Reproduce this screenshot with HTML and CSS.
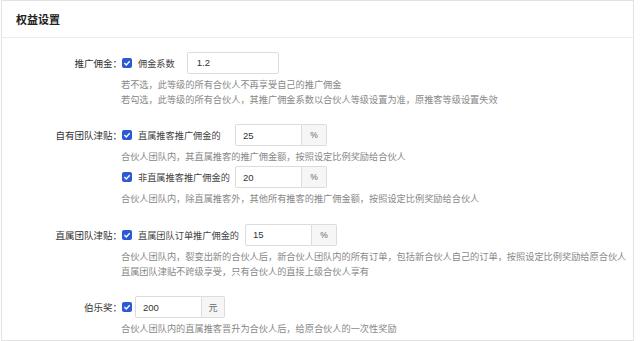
FILE: index.html
```html
<!DOCTYPE html>
<html>
<head>
    <meta charset="UTF-8">
    <meta name="viewport" content="width=device-width, initial-scale=1.0">
    <title>权益设置</title>
    <link rel="stylesheet" href="styles.css">
</head>
<body>
    <div class="panel">
        <div class="panelHead">权益设置</div>
        <div class="panelBody">

            <div class="campo">
                <div class="rotulo">推广佣金：</div>
                <div class="conteudo">
                    <div class="linha">
                        <span class="check"><svg viewBox="0 0 10 10"><rect width="10" height="10" rx="2" fill="#2c59d4"/><polyline points="2.4,5.1 4.3,7 7.7,3.2" fill="none" stroke="#fff" stroke-width="1.4"/></svg></span>
                        <span class="opcao opcaoCurta">佣金系数</span>
                        <input type="text" class="entrada entradaLonga" value="1.2" readonly>
                    </div>
                    <p class="dica">若不选，此等级的所有合伙人不再享受自己的推广佣金<br>若勾选，此等级的所有合伙人，其推广佣金系数以合伙人等级设置为准，原推客等级设置失效</p>
                </div>
            </div>

            <div class="campo">
                <div class="rotulo">自有团队津贴：</div>
                <div class="conteudo">
                    <div class="linha">
                        <span class="check"><svg viewBox="0 0 10 10"><rect width="10" height="10" rx="2" fill="#2c59d4"/><polyline points="2.4,5.1 4.3,7 7.7,3.2" fill="none" stroke="#fff" stroke-width="1.4"/></svg></span>
                        <span class="opcao opcaoFixa">直属推客推广佣金的</span>
                        <input type="text" class="entrada" value="25" readonly>
                        <span class="sufixo">%</span>
                    </div>
                    <p class="dica">合伙人团队内，其直属推客的推广佣金额，按照设定比例奖励给合伙人</p>
                    <div class="linha">
                        <span class="check"><svg viewBox="0 0 10 10"><rect width="10" height="10" rx="2" fill="#2c59d4"/><polyline points="2.4,5.1 4.3,7 7.7,3.2" fill="none" stroke="#fff" stroke-width="1.4"/></svg></span>
                        <span class="opcao opcaoFixa">非直属推客推广佣金的</span>
                        <input type="text" class="entrada" value="20" readonly>
                        <span class="sufixo">%</span>
                    </div>
                    <p class="dica">合伙人团队内，除直属推客外，其他所有推客的推广佣金额，按照设定比例奖励给合伙人</p>
                </div>
            </div>

            <div class="campo">
                <div class="rotulo">直属团队津贴：</div>
                <div class="conteudo">
                    <div class="linha">
                        <span class="check"><svg viewBox="0 0 10 10"><rect width="10" height="10" rx="2" fill="#2c59d4"/><polyline points="2.4,5.1 4.3,7 7.7,3.2" fill="none" stroke="#fff" stroke-width="1.4"/></svg></span>
                        <span class="opcao opcaoLonga">直属团队订单推广佣金的</span>
                        <input type="text" class="entrada" value="15" readonly>
                        <span class="sufixo">%</span>
                    </div>
                    <p class="dica">合伙人团队内，裂变出新的合伙人后，新合伙人团队内的所有订单，包括新合伙人自己的订单，按照设定比例奖励给原合伙人<br>直属团队津贴不跨级享受，只有合伙人的直接上级合伙人享有</p>
                </div>
            </div>

            <div class="campo">
                <div class="rotulo">伯乐奖：</div>
                <div class="conteudo">
                    <div class="linha">
                        <span class="check checkJunto"><svg viewBox="0 0 10 10"><rect width="10" height="10" rx="2" fill="#2c59d4"/><polyline points="2.4,5.1 4.3,7 7.7,3.2" fill="none" stroke="#fff" stroke-width="1.4"/></svg></span>
                        <input type="text" class="entrada" value="200" readonly>
                        <span class="sufixo sufixoYuan">元</span>
                    </div>
                    <p class="dica">合伙人团队内的直属推客晋升为合伙人后，给原合伙人的一次性奖励</p>
                </div>
            </div>

        </div>
    </div>
</body>
</html>
```

FILE: styles.css
```css
* {
    padding: 0px;
    margin: 0px;
    box-sizing: border-box;
}

body {
    font-family: "Noto Sans CJK SC", "Noto Sans", sans-serif;
    color: #333;
    background-color: #fff;
}

.panel {
    width: 633px;
    height: 341px;
    margin-left: 1px;
    border: 1px solid #e2e2e2;
}

.panelHead {
    height: 37px;
    line-height: 36px;
    padding-left: 14px;
    font-size: 11px;
    font-weight: bold;
    color: #222;
    border-bottom: 1px solid #ececec;
}

.panelBody {
    padding-top: 13.5px;
}

/* Linhas do formulário */

.campo {
    display: flex;
    margin-bottom: 17.5px;
}

.rotulo {
    width: 120px;
    flex-shrink: 0;
    text-align: right;
    font-size: 9.5px;
    line-height: 22px;
    color: #333;
}

.conteudo {
    flex: 1;
}

.linha {
    display: flex;
    align-items: center;
    height: 22px;
}

.dica + .linha {
    margin-top: 2px;
}

.check {
    width: 10px;
    height: 10px;
    margin-right: 6px;
    flex-shrink: 0;
}

.check svg {
    display: block;
    width: 10px;
    height: 10px;
}

.checkJunto {
    margin-right: 3px;
}

.opcao {
    font-size: 9.2px;
    color: #444;
    white-space: nowrap;
}

.opcaoCurta {
    margin-right: 12px;
}

.opcaoFixa {
    width: 97px;
}

.opcaoLonga {
    margin-right: 6px;
}

.entrada {
    width: 67px;
    height: 22px;
    padding: 0px 7px;
    border: 1px solid #dcdcdc;
    border-radius: 2px 0px 0px 2px;
    outline: none;
    font-family: "Liberation Sans", sans-serif;
    font-size: 9.5px;
    color: #333;
    background-color: #fff;
}

.entradaLonga {
    width: 92px;
    padding-left: 9px;
    border-radius: 2px;
}

.sufixo {
    display: flex;
    align-items: center;
    justify-content: center;
    width: 25px;
    height: 22px;
    border: 1px solid #dcdcdc;
    border-left: none;
    border-radius: 0px 2px 2px 0px;
    background-color: #f6f6f6;
    font-family: "Liberation Sans", "Noto Sans CJK SC", sans-serif;
    font-size: 8.5px;
    color: #666;
}

.sufixoYuan {
    width: 23px;
    font-size: 9px;
}

.dica {
    margin-top: 3px;
    margin-left: -1px;
    font-size: 9.2px;
    line-height: 15px;
    color: #888;
    white-space: nowrap;
}
```
